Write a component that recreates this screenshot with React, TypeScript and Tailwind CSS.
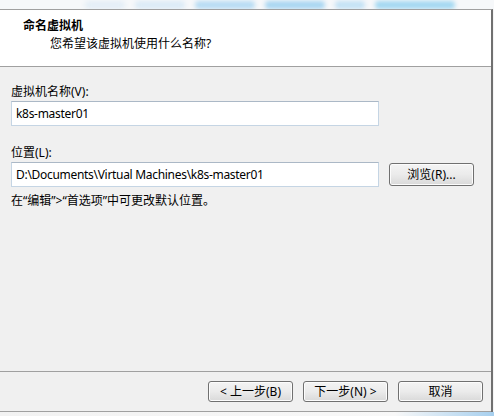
import React from "react";

const font = { fontFamily: '"Segoe UI", "Noto Sans", "Noto Sans CJK SC", sans-serif' };

function Btn({ children, className = "" }: { children: React.ReactNode; className?: string }) {
  return (
    <div
      className={
        "flex items-center justify-center rounded-[3px] border border-[#707070] bg-linear-to-b from-[#f4f4f4] via-[#ebebeb] to-[#d9d9d9] text-[12px] text-black shadow-[inset_0_0_0_1px_#fcfcfc] " +
        className
      }
    >
      {children}
    </div>
  );
}

function Field({ value }: { value: string }) {
  return (
    <div className="flex h-[25px] w-[368px] items-center border border-[#c5d5e4] border-t-[#abb8c6] bg-white pl-[4px] text-[12px] tracking-[-0.3px] text-black">
      {value}
    </div>
  );
}

const blobs = [
  { w: 40, c: "bg-[#e4eef6]" },
  { w: 50, c: "bg-[#dcebf6]" },
  { w: 60, c: "bg-[#b8dcf3]" },
  { w: 60, c: "bg-[#a9d6f1]" },
  { w: 30, c: "bg-[#c4e2f4]" },
  { w: 80, c: "bg-[#a3d8f1]" },
];

export default function App() {
  return (
    <div className="flex h-[416px] w-[494px] flex-col overflow-hidden bg-[#f4f4f4]" style={font}>
      <div className="flex h-[9px] shrink-0 items-start gap-[10px] overflow-hidden bg-[#f6f8fa] pl-[85px]">
        {blobs.map((b, i) => (
          <div key={i} className={"mt-[1px] h-[8px] rounded-full blur-[2px] " + b.c} style={{ width: b.w }} />
        ))}
      </div>
      <div className="flex w-[493px] flex-1 flex-col border-t border-r-2 border-t-[#a0a0a0] border-r-[#707070] bg-[#f0f0f0]">
        <div className="h-[57px] shrink-0 border-b border-[#a0a0a0] bg-white">
          <div className="pl-[23px] pt-[7px] text-[12px] font-bold leading-[18px] text-black">命名虚拟机</div>
          <div className="pl-[50px] text-[12px] leading-[18px] text-black">您希望该虚拟机使用什么名称?</div>
        </div>
        <div className="flex flex-1 flex-col pl-[11px] pt-[17px]">
          <div className="text-[12px] leading-[16px] text-black">虚拟机名称(V):</div>
          <div className="mt-[1px]">
            <Field value="k8s-master01" />
          </div>
          <div className="mt-[19px] text-[12px] leading-[16px] text-black">位置(L):</div>
          <div className="mt-[1px] flex items-center gap-[10px]">
            <Field value={"D:\\Documents\\Virtual Machines\\k8s-master01"} />
            <Btn className="h-[23px] w-[85px]">浏览(R)...</Btn>
          </div>
          <div className="mt-[6px] text-[12px] leading-[16px] text-black">在“编辑”&gt;“首选项”中可更改默认位置。</div>
        </div>
        <div className="flex h-[41px] shrink-0 items-center justify-end gap-[10px] border-t border-b border-[#a0a0a0] pr-[8px]">
          <Btn className="h-[21px] w-[85px]">&lt; 上一步(B)</Btn>
          <Btn className="h-[21px] w-[85px]">下一步(N) &gt;</Btn>
          <Btn className="h-[21px] w-[85px]">取消</Btn>
        </div>
      </div>
      <div className="h-[4px] shrink-0 bg-linear-to-r from-[#f2f2f2] via-[#f8f8f8] via-80% to-[#a6cfee]" />
    </div>
  );
}
